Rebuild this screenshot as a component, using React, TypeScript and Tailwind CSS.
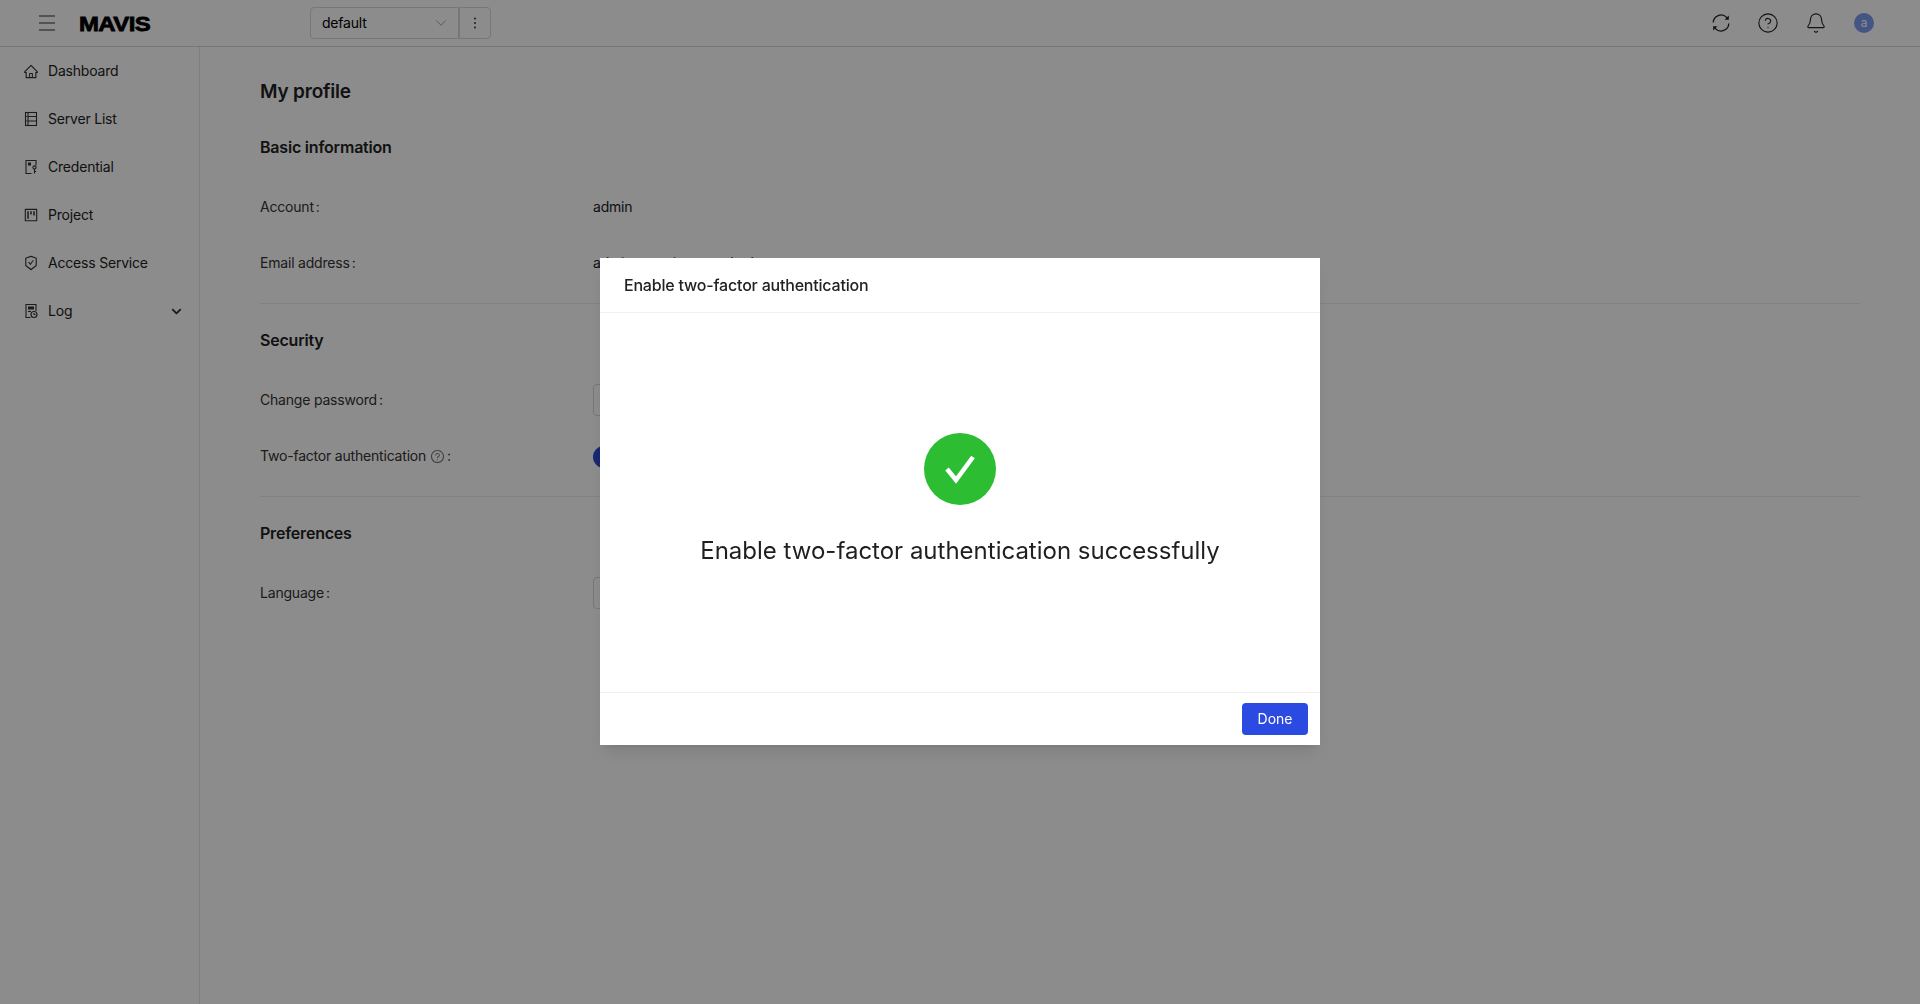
import { Bell, ChevronDown, CircleHelp } from "lucide-react";
import {
  AiOutlineHome,
  AiOutlineProject,
  AiOutlineQuestionCircle,
  AiOutlineSafetyCertificate,
} from "react-icons/ai";

const ServerIcon = () => (
  <svg width="16" height="16" viewBox="0 0 16 16" fill="none" stroke="currentColor" strokeWidth="1.1">
    <rect x="2.5" y="1.5" width="11" height="13" />
    <path d="M5 1.5v13M5 5.5h8.5M5 10h8.5M3.2 5.5h1M3.2 10h1" />
  </svg>
);

const CredentialIcon = () => (
  <svg width="16" height="16" viewBox="0 0 16 16" fill="none" stroke="currentColor" strokeWidth="1.1">
    <path d="M8.5 14.5H3V1.5h10v5" />
    <rect x="5" y="3.5" width="3" height="3" fill="currentColor" stroke="none" />
    <circle cx="11.5" cy="8.5" r="1.6" />
    <path d="M11.5 10v4.5M11.5 12.5h1.5" />
  </svg>
);

const LogIcon = () => (
  <svg width="16" height="16" viewBox="0 0 16 16" fill="none" stroke="currentColor" strokeWidth="1.1">
    <path d="M7.5 14.5H3V1.5h10v6.5" />
    <rect x="5" y="3.5" width="6" height="3" fill="currentColor" stroke="none" />
    <path d="M5 8.5h3" />
    <circle cx="11" cy="11.5" r="3" />
    <path d="M11 10v1.5h1.5" />
  </svg>
);

const MenuIcon = () => (
  <svg width="16" height="16" viewBox="0 0 16 16" fill="none" stroke="currentColor" strokeWidth="1.2">
    <path d="M0 1h16M0 8h16M0 15h16" />
  </svg>
);

const SyncIcon = () => (
  <svg width="20" height="20" viewBox="0 0 20 20" fill="none" stroke="currentColor" strokeWidth="1.3">
    <path d="M2.2 9.5A7.8 7.8 0 0 1 15.6 4.4L17 5.8" />
    <path d="M17.8 10.5A7.8 7.8 0 0 1 4.4 15.6L3 14.2" />
    <path d="M17.8 2.6v4.2h-4.2z" fill="currentColor" stroke="none" />
    <path d="M2.2 17.4v-4.2h4.2z" fill="currentColor" stroke="none" />
  </svg>
);

const navItems = [
  { label: "Dashboard", icon: <AiOutlineHome size={17} /> },
  { label: "Server List", icon: <ServerIcon /> },
  { label: "Credential", icon: <CredentialIcon /> },
  { label: "Project", icon: <AiOutlineProject size={16} /> },
  { label: "Access Service", icon: <AiOutlineSafetyCertificate size={16} /> },
  { label: "Log", icon: <LogIcon />, more: true },
];

const Header = () => (
  <header className="flex h-[47px] items-center border-b border-[#d9d9d9] bg-white">
    <span className="ml-[39px] text-[#333]">
      <MenuIcon />
    </span>
    <span className="ml-[24px] w-[74px] origin-left scale-x-[1.14] font-['Liberation_Sans',sans-serif] text-[21px] font-bold leading-none tracking-[-0.5px] text-black [-webkit-text-stroke:0.8px_black]">
      MAVIS
    </span>
    <div className="ml-[157px] flex h-8 items-center">
      <div className="flex h-8 w-[149px] items-center justify-between rounded-l-sm border border-[#d9d9d9] pr-[8px] pl-[11px]">
        <span>default</span>
        <ChevronDown size={18} strokeWidth={1} className="text-[#888]" />
      </div>
      <div className="flex h-8 w-8 items-center justify-center rounded-r-sm border border-[#d9d9d9] text-[#333]">
        <svg width="4" height="14" viewBox="0 0 4 14" fill="currentColor">
          <circle cx="2" cy="2.5" r="1" />
          <circle cx="2" cy="7" r="1" />
          <circle cx="2" cy="11.5" r="1" />
        </svg>
      </div>
    </div>
    <div className="mr-[46px] ml-auto flex items-center gap-[26px] text-[#222]">
      <SyncIcon />
      <CircleHelp size={22} strokeWidth={1.2} />
      <Bell size={22} strokeWidth={1.2} />
      <div className="ml-px flex h-5 w-5 items-center justify-center rounded-full bg-[#7c9cf0] text-xs text-white">a</div>
    </div>
  </header>
);

const Sidebar = () => (
  <aside className="w-[200px] shrink-0 border-r border-[#e6e6e6] bg-white">
    {navItems.map((item) => (
      <div key={item.label} className="flex h-12 items-center pr-[15px] pl-[23px] text-[#222]">
        <span className="flex w-4 items-center justify-center text-[#333]">{item.icon}</span>
        <span className="ml-[9px]">{item.label}</span>
        {item.more && <ChevronDown size={15} strokeWidth={3} className="ml-auto text-[#333]" />}
      </div>
    ))}
  </aside>
);

const Colon = () => <span className="ml-[2px]">:</span>;

const Row = ({ label, children }: { label: React.ReactNode; children?: React.ReactNode }) => (
  <div className="flex h-8 items-center">
    <div className="w-[333px] shrink-0 text-[#333]">{label}</div>
    {children}
  </div>
);

const Profile = () => (
  <main className="flex-1 pt-[33px] pr-[60px] pl-[60px]">
    <h1 className="text-[19px] leading-6 font-semibold text-[#222]">My profile</h1>
    <h2 className="mt-[31px] text-base leading-6 font-semibold text-[#222]">Basic information</h2>
    <div className="mt-[32px] flex flex-col gap-6">
      <Row
        label={
          <>
            Account
            <Colon />
          </>
        }
      >
        <span className="text-[#222]">admin</span>
      </Row>
      <Row
        label={
          <>
            Email address
            <Colon />
          </>
        }
      >
        <span className="text-[#222]">admin@mavis.example.dev</span>
      </Row>
    </div>
    <div className="mt-6 border-t border-[#ececec]" />
    <h2 className="mt-6 text-base leading-6 font-semibold text-[#222]">Security</h2>
    <div className="mt-[32px] flex flex-col gap-6">
      <Row
        label={
          <>
            Change password
            <Colon />
          </>
        }
      >
        <div className="h-8 w-32 rounded-sm border border-[#d9d9d9]" />
      </Row>
      <Row
        label={
          <span className="flex items-center">
            Two-factor authentication
            <AiOutlineQuestionCircle size={15} className="ml-1 text-[#777]" />
            <Colon />
          </span>
        }
      >
        <div className="mt-px h-[22px] w-14 rounded-full bg-[#2b4acb]" />
      </Row>
    </div>
    <div className="mt-6 border-t border-[#ececec]" />
    <h2 className="mt-6 text-base leading-6 font-semibold text-[#222]">Preferences</h2>
    <div className="mt-[32px]">
      <Row
        label={
          <>
            Language
            <Colon />
          </>
        }
      >
        <div className="h-8 w-32 rounded-sm border border-[#d9d9d9]" />
      </Row>
    </div>
  </main>
);

const SuccessModal = () => (
  <div className="fixed inset-0 bg-black/45">
    <div className="mx-auto mt-[258px] flex h-[487px] w-[720px] flex-col bg-white shadow-lg">
      <div className="flex h-[55px] items-center border-b border-[#f0f0f0] px-6 text-base font-medium text-[#222]">
        Enable two-factor authentication
      </div>
      <div className="flex flex-1 flex-col items-center pt-[120px]">
        <div className="flex h-[72px] w-[72px] items-center justify-center rounded-full bg-[#2dbd33]">
          <svg width="36" height="36" viewBox="0 0 36 36" fill="none" stroke="white" strokeWidth="4.5">
            <path d="M5 18l9 11L31 6" />
          </svg>
        </div>
        <p className="mt-[30px] text-2xl leading-8 tracking-normal text-[#1f1f1f]">
          Enable two-factor authentication successfully
        </p>
      </div>
      <div className="flex h-[53px] items-center justify-end border-t border-[#f0f0f0] px-3">
        <button className="h-8 w-[66px] rounded-sm bg-[#2b4ae2] tracking-normal text-white">Done</button>
      </div>
    </div>
  </div>
);

export default function App() {
  return (
    <div className="flex h-[1004px] flex-col overflow-hidden bg-white font-['Inter',sans-serif] text-sm tracking-[-0.2px]">
      <Header />
      <div className="flex flex-1">
        <Sidebar />
        <Profile />
      </div>
      <SuccessModal />
    </div>
  );
}
